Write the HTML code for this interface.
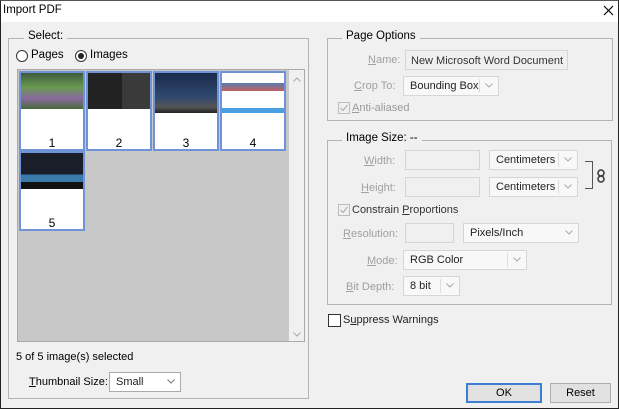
<!DOCTYPE html>
<html><head><style>
*{box-sizing:border-box;margin:0;padding:0}
body{width:619px;height:409px;overflow:hidden;background:#f0f0f0;font-family:"Liberation Sans",sans-serif;font-size:11px;color:#000;position:relative}
.a{position:absolute;white-space:nowrap}
.frame{position:absolute;left:0;top:0;width:619px;height:409px;border:1px solid #222;border-top:1px solid #555}
.title{left:1px;top:1px;width:617px;height:21px;background:#fff}
.grp{position:absolute;border:1px solid #b4b4b4}
.leg{position:absolute;background:#f0f0f0;padding:0 4px;font-size:11.5px}
.dis{color:#a0a0a0}
.inp{position:absolute;border:1px solid #d6d6d6;background:#f0f0f0;white-space:nowrap;overflow:hidden}
.sel{position:absolute;border:1px solid #d6d6d6;background:#f8f8f8;padding:3px 0 0 6px;color:#222;white-space:nowrap}
.sel .dv{position:absolute;right:18px;top:2px;bottom:2px;border-left:1px solid #ddd}
.sel svg{position:absolute;right:5px;top:6px}
.th{position:absolute;width:66px;height:80px;border:2px solid #6f93d6;background:#fff;text-align:center}
.th .im{height:36px}
.th span{position:absolute;bottom:-1px;left:0;right:0;font-size:12px}
.cb{position:absolute;width:12px;height:12px;border:1px solid #b0b0b0;background:#f0f0f0}
</style></head><body>
<div class="a title"></div>
<div class="frame"></div>
<div class="a" style="left:3px;top:4px;font-size:11.5px">Import PDF</div>
<svg class="a" style="left:603px;top:5px" width="11" height="11"><path d="M1 1L10 10M10 1L1 10" stroke="#000" stroke-width="1.2"/></svg>

<div class="grp" style="left:8px;top:38px;width:301px;height:361px"></div>
<div class="a leg" style="left:24px;top:30px">Select:</div>
<div class="a" style="left:16px;top:50px;width:12px;height:12px;border:1px solid #333;border-radius:50%;background:#fff"></div>
<div class="a" style="left:31px;top:49px;font-size:11.5px">Pages</div>
<div class="a" style="left:75px;top:50px;width:12px;height:12px;border:1px solid #333;border-radius:50%;background:#fff"><div style="margin:2px;width:6px;height:6px;border-radius:50%;background:#222"></div></div>
<div class="a" style="left:90px;top:49px;font-size:11.5px">Images</div>

<div class="a" style="left:17px;top:69px;width:288px;height:273px;background:#c8c8c8;border:1px solid #aaa"></div>
<div class="a" style="left:289px;top:70px;width:15px;height:271px;background:#f0f0f0"></div>
<svg class="a" style="left:293px;top:77px" width="8" height="5"><path d="M0.5 4.5L4 1L7.5 4.5" stroke="#aaa" fill="none"/></svg>
<svg class="a" style="left:293px;top:332px" width="8" height="5"><path d="M0.5 0.5L4 4L7.5 0.5" stroke="#aaa" fill="none"/></svg>

<div class="th" style="left:19px;top:71px"><div class="im" style="background:linear-gradient(#3c5a3c,#6a9a50 40%,#8a6aa0 70%,#4a6a3a)"></div><span>1</span></div>
<div class="th" style="left:86px;top:71px"><div class="im" style="background:linear-gradient(90deg,#222 55%,#3a3a3a 55%)"></div><span>2</span></div>
<div class="th" style="left:153px;top:71px"><div class="im" style="height:40px;background:linear-gradient(#1a2a4a,#304870 60%,#555 85%,#222)"></div><span>3</span></div>
<div class="th" style="left:220px;top:71px"><div class="im" style="height:40px;background:linear-gradient(#fff 25%,#5a7ab0 25%,#c06060 45%,#fff 45%,#fff 88%,#4aa0e0 88%)"></div><span>4</span></div>
<div class="th" style="left:19px;top:151px"><div class="im" style="height:36px;background:linear-gradient(#1a1e28 60%,#3a7aaa 60%,#3a7aaa 80%,#111 80%)"></div><span>5</span></div>

<div class="a" style="left:16px;top:351px">5 of 5 image(s) selected</div>
<div class="a" style="left:29px;top:376px"><u>T</u>humbnail Size:</div>
<div class="sel" style="left:109px;top:372px;width:72px;height:20px;background:#fff;border-color:#aaa">Small<svg width="8" height="5"><path d="M0.5 0.5L4 4L7.5 0.5" stroke="#777" fill="none"/></svg></div>

<div class="grp" style="left:327px;top:38px;width:286px;height:83px"></div>
<div class="a leg" style="left:342px;top:30px">Page Options</div>
<div class="a dis" style="left:368px;top:54px"><u>N</u>ame:</div>
<div class="inp" style="left:405px;top:50px;width:163px;height:20px;padding:4px 0 0 5px;color:#333">New Microsoft Word Document</div>
<div class="a dis" style="left:354px;top:80px"><u>C</u>rop To:</div>
<div class="sel" style="left:403px;top:76px;width:96px;height:20px">Bounding Box<span class="dv"></span><svg width="8" height="5"><path d="M0.5 0.5L4 4L7.5 0.5" stroke="#aaa" fill="none"/></svg></div>
<svg class="a" style="left:338px;top:102px" width="12" height="12"><rect x="0.5" y="0.5" width="11" height="11" fill="#f0f0f0" stroke="#bbb"/><path d="M2.5 6L5 8.5L9.5 3" stroke="#aaa" fill="none"/></svg>
<div class="a dis" style="left:352px;top:102px;color:#999"><u>A</u>nti-aliased</div>

<div class="grp" style="left:327px;top:140px;width:285px;height:165px"></div>
<div class="a leg" style="left:342px;top:132px">Image Size: --</div>
<div class="a dis" style="left:364px;top:155px"><u>W</u>idth:</div>
<div class="inp" style="left:405px;top:150px;width:75px;height:20px"></div>
<div class="sel" style="left:489px;top:150px;width:89px;height:20px">Centimeters<span class="dv"></span><svg width="8" height="5"><path d="M0.5 0.5L4 4L7.5 0.5" stroke="#aaa" fill="none"/></svg></div>
<div class="a dis" style="left:361px;top:182px"><u>H</u>eight:</div>
<div class="inp" style="left:405px;top:177px;width:75px;height:20px"></div>
<div class="sel" style="left:489px;top:177px;width:89px;height:20px">Centimeters<span class="dv"></span><svg width="8" height="5"><path d="M0.5 0.5L4 4L7.5 0.5" stroke="#aaa" fill="none"/></svg></div>
<div class="a" style="left:585px;top:161px;width:8px;height:28px;border:1px solid #555;border-left:none"></div>
<svg class="a" style="left:597px;top:169px" width="8" height="14"><rect x="1" y="1" width="6" height="6" rx="3" fill="none" stroke="#333" stroke-width="1.5"/><rect x="1" y="7" width="6" height="6" rx="3" fill="none" stroke="#333" stroke-width="1.5"/></svg>
<svg class="a" style="left:338px;top:204px" width="12" height="12"><rect x="0.5" y="0.5" width="11" height="11" fill="#f0f0f0" stroke="#bbb"/><path d="M2.5 6L5 8.5L9.5 3" stroke="#aaa" fill="none"/></svg>
<div class="a" style="left:352px;top:204px;color:#333">Constrain <u>P</u>roportions</div>
<div class="a dis" style="left:343px;top:228px"><u>R</u>esolution:</div>
<div class="inp" style="left:405px;top:223px;width:49px;height:20px"></div>
<div class="sel" style="left:463px;top:223px;width:116px;height:20px">Pixels/Inch<svg width="8" height="5"><path d="M0.5 0.5L4 4L7.5 0.5" stroke="#aaa" fill="none"/></svg></div>
<div class="a dis" style="left:367px;top:255px"><u>M</u>ode:</div>
<div class="sel" style="left:403px;top:250px;width:124px;height:20px">RGB Color<span class="dv"></span><svg width="8" height="5"><path d="M0.5 0.5L4 4L7.5 0.5" stroke="#aaa" fill="none"/></svg></div>
<div class="a dis" style="left:346px;top:281px"><u>B</u>it Depth:</div>
<div class="sel" style="left:403px;top:276px;width:57px;height:20px">8 bit<span class="dv"></span><svg width="8" height="5"><path d="M0.5 0.5L4 4L7.5 0.5" stroke="#aaa" fill="none"/></svg></div>

<div class="cb" style="left:328px;top:314px;background:#fff;border-color:#333;width:13px;height:13px"></div>
<div class="a" style="left:343px;top:314px;color:#222">S<u>u</u>ppress Warnings</div>

<div class="a" style="left:466px;top:383px;width:76px;height:20px;border:2px solid #3c7fd0;background:#e1e1e1;text-align:center;line-height:16px">OK</div>
<div class="a" style="left:550px;top:383px;width:61px;height:20px;border:1px solid #adadad;background:#e1e1e1;text-align:center;line-height:18px">Reset</div>
</body></html>
